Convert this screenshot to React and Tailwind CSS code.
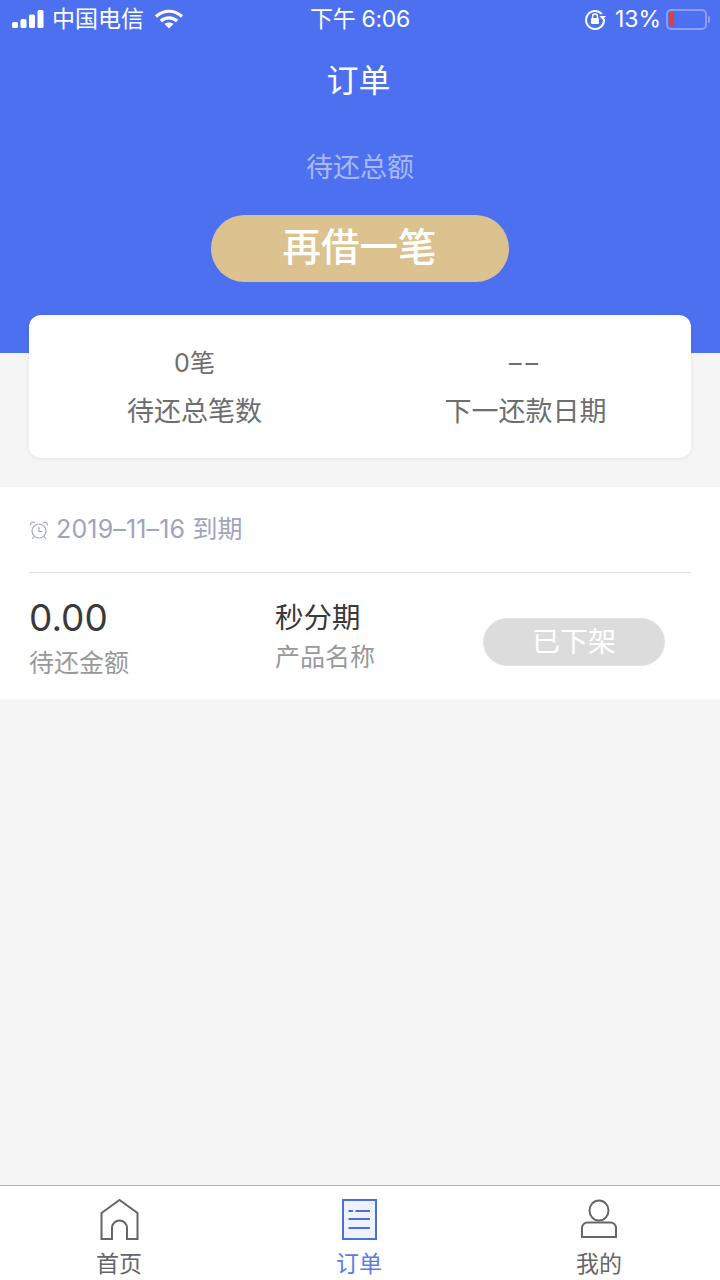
const cjk = "font-['Inter','Noto_Sans_CJK_SC',sans-serif]";

function StatusBar() {
  return (
    <div className="flex h-[38px] items-center text-white">
      <div className="flex w-[310px] items-center pl-3">
        <svg width="32" height="20" viewBox="0 0 32 20" fill="#fff">
          <rect x="0" y="13" width="6" height="6" rx="1.5" />
          <rect x="8.5" y="10" width="6" height="9" rx="1.5" />
          <rect x="17" y="5.5" width="6" height="13.5" rx="1.5" />
          <rect x="25.5" y="1" width="6" height="18" rx="1.5" />
        </svg>
        <span className="ml-[8px] text-[23px] leading-none">中国电信</span>
        <svg className="ml-[10px]" width="30" height="22" viewBox="0 0 30 22" fill="none" stroke="#fff" strokeWidth="3.2">
          <path d="M2 8.5C9.5 1.5 20.5 1.5 28 8.5" />
          <path d="M6.8 13C11.5 8.8 18.5 8.8 23.2 13" />
          <path d="M15 20.5l-4.5-4.5c2.6-2 6.4-2 9 0z" fill="#fff" stroke="none" />
        </svg>
      </div>
      <span className="text-[23px] leading-none tracking-[-0.3px]">下午 6:06</span>
      <div className="ml-auto flex items-center pr-[10px]">
        <svg width="22" height="22" viewBox="0 0 22 22" fill="none">
          <path d="M17.8 6A9 9 0 1 0 20 11" stroke="#fff" strokeWidth="2" />
          <path d="M15.5 8h6.5l-3.2 4z" fill="#fff" />
          <rect x="7" y="10" width="8" height="6" rx="1" fill="#fff" />
          <path d="M8.5 10V8.5a2.5 2.5 0 0 1 5 0V10" stroke="#fff" strokeWidth="1.3" />
        </svg>
        <span className="ml-[9px] w-[46px] text-[23px] leading-none">13%</span>
        <div className="ml-[5px] flex h-[21px] w-[41px] items-center rounded-[5px] border-2 border-[#8a9ff5] px-[1px]">
          <div className="h-[14px] w-[5px] rounded-[1px] bg-[#f0392f]" />
        </div>
        <div className="ml-[1px] h-[7px] w-[2px] rounded-r-sm bg-[#8a9ff5]" />
      </div>
    </div>
  );
}

function Stat({ value, label }) {
  return (
    <div className="flex flex-col items-center">
      <div className="text-[25px] leading-[32px] text-[#6e6e6e]">{value}</div>
      <div className="mt-[17px] text-[27px] leading-[32px] text-[#6e6e6e]">{label}</div>
    </div>
  );
}

function NavItem({ label, active, children }) {
  return (
    <div className="flex w-[240px] flex-col items-center">
      <div className="h-[44px]">{children}</div>
      <div className={`mt-[6px] pr-[2px] text-[23px] leading-[30px] ${active ? "text-[#5b7be8]" : "text-[#666666]"}`}>{label}</div>
    </div>
  );
}

export default function App() {
  return (
    <div className={`flex h-[1280px] w-[720px] flex-col overflow-hidden bg-[#f5f5f5] ${cjk}`}>
      <div className="h-[353px] bg-[#4d70f1]">
        <StatusBar />
        <div className="mt-[22px] pr-[3px] text-center text-[32px] leading-[42px] text-white">订单</div>
        <div className="mt-[49px] text-center text-[27px] leading-[34px] text-[#a9b8f7]">待还总额</div>
        <div className="mx-auto mt-[30px] flex h-[67px] w-[298px] items-center justify-center rounded-full bg-[#dcc28f] pb-[1px] pr-[1px] text-[38.5px] font-medium text-white">
          再借一笔
        </div>
      </div>

      <div className="mx-[29px] mt-[-38px] grid h-[143px] grid-cols-2 rounded-xl bg-white pt-[32px] shadow-[0_1px_4px_rgba(0,0,0,0.08)]">
        <Stat value="0笔" label="待还总笔数" />
        <Stat value={<span className="tracking-[4px]">––</span>} label="下一还款日期" />
      </div>

      <div className="mt-[29px] h-[212px] bg-white px-[29px]">
        <div className="flex h-[86px] items-center border-b border-[#dddddd]">
          <svg width="20" height="20" viewBox="0 0 20 20" fill="none" stroke="#a5a8be" strokeWidth="1.2">
            <circle cx="10" cy="11" r="7" />
            <path d="M10 7v4.5h3.5" />
            <path d="M1.5 5.5A3 3 0 0 1 6 2.5" />
            <path d="M18.5 5.5A3 3 0 0 0 14 2.5" />
            <path d="M5 16.5L3 19M15 16.5l2 2.5" />
          </svg>
          <span className="ml-[7px] text-[25px] leading-none tracking-[0.15px] text-[#a0a3bd]">2019–11–16 到期</span>
        </div>
        <div className="flex">
          <div className="w-[246px] pt-[22px]">
            <div className="text-[37px] leading-[46px] text-[#3a3a3a]">0.00</div>
            <div className="mt-[4px] text-[25px] leading-[36px] text-[#999999]">待还金额</div>
          </div>
          <div className="w-[208px] pt-[27px]">
            <div className="text-[28.5px] leading-[36px] text-[#3a3a3a]">秒分期</div>
            <div className="mt-[3px] text-[25px] leading-[36px] text-[#999999]">产品名称</div>
          </div>
          <div className="mt-[45px] flex h-[48px] w-[182px] items-center justify-center rounded-full border border-[#e4e4e4] bg-[#dcdcdc] text-[28px] text-white">
            已下架
          </div>
        </div>
      </div>

      <div className="flex-1" />

      <div className="flex h-[95px] border-t border-[#b2b2b2] bg-white pt-[13px]">
        <NavItem label="首页">
          <svg width="40" height="42" viewBox="0 0 40 42" fill="none" stroke="#666666" strokeWidth="2">
            <path d="M1.5 14L19.5 1l18 13v26H27V29a7 7 0 0 0-15 0v11H1.5z" />
          </svg>
        </NavItem>
        <NavItem label="订单" active>
          <svg width="36" height="42" viewBox="0 0 36 42" fill="#eef2fd" stroke="#4d70d8" strokeWidth="2">
            <rect x="1" y="1" width="33" height="39" />
            <path d="M6.5 12h4.5M13.5 12H28M6.5 20H28M6.5 29H28" />
          </svg>
        </NavItem>
        <NavItem label="我的">
          <svg width="38" height="42" viewBox="0 0 38 42" fill="none" stroke="#666666" strokeWidth="2">
            <ellipse cx="18" cy="11.5" rx="9.5" ry="10" />
            <path d="M1 38v-9a5.5 5.5 0 0 1 5.5-5.5h23A5.5 5.5 0 0 1 35 29v9z" />
          </svg>
        </NavItem>
      </div>
    </div>
  );
}
